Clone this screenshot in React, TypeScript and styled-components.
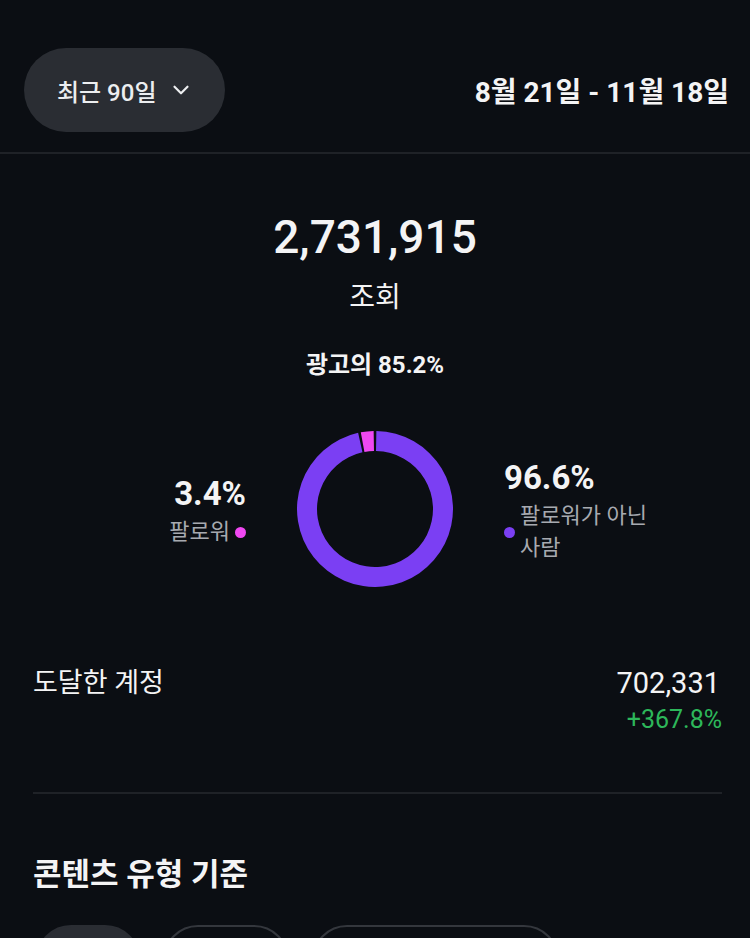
import styled, { createGlobalStyle } from "styled-components";
import { ChevronDown } from "lucide-react";

const GlobalStyle = createGlobalStyle`
  body {
    margin: 0;
    background: #0b0e13;
    font-family: Roboto, "Noto Sans CJK KR", sans-serif;
    color: #f4f4f5;
  }
`;

const Page = styled.div`
  width: 750px;
  height: 938px;
  overflow: hidden;
  background: #0b0e13;
`;

const Header = styled.div`
  display: flex;
  align-items: center;
  justify-content: space-between;
  padding: 48px 21px 20px 24px;
  border-bottom: 2px solid #1f2227;
`;

const RangeButton = styled.button`
  display: flex;
  align-items: center;
  gap: 11px;
  height: 84px;
  padding: 0 31px 0 33px;
  border: none;
  border-radius: 42px;
  background: #2a2d33;
  color: #eceef0;
  font-family: inherit;
  font-size: 24px;
  font-weight: 500;
`;

const DateRange = styled.div`
  font-size: 28px;
  font-weight: 700;
`;

const Summary = styled.section`
  display: flex;
  flex-direction: column;
  align-items: center;
  padding-top: 55px;
`;

const BigNumber = styled.div`
  font-size: 46px;
  line-height: 56px;
  font-weight: 500;
`;

const Caption = styled.div`
  margin-top: 13px;
  font-size: 28px;
  line-height: 40px;
`;

const AdShare = styled.div`
  margin-top: 31px;
  font-size: 24px;
  line-height: 32px;
  font-weight: 700;
`;

const ChartRow = styled.div`
  display: grid;
  grid-template-columns: 1fr auto 1fr;
  align-items: center;
  column-gap: 51px;
  width: 100%;
  margin-top: 50px;
`;

const Legend = styled.div<{ $side: "left" | "right" }>`
  display: flex;
  flex-direction: column;
  align-items: ${(p) => (p.$side === "left" ? "flex-end" : "flex-start")};
  justify-self: ${(p) => (p.$side === "left" ? "end" : "start")};
  margin-top: 4px;
`;

const Percent = styled.div`
  font-size: 33px;
  line-height: 40px;
  font-weight: 700;
`;

const LegendLabel = styled.div`
  display: flex;
  align-items: center;
  gap: 5px;
  margin-top: 2px;
  font-size: 22px;
  line-height: 32px;
  color: #a7aab0;
`;

const LabelText = styled.span`
  max-width: 150px;
`;

const Dot = styled.span<{ $color: string }>`
  flex: none;
  width: 11px;
  height: 11px;
  border-radius: 50%;
  background: ${(p) => p.$color};
`;

const Body = styled.section`
  padding: 0 28px 0 33px;
`;

const MetricRow = styled.div`
  display: flex;
  justify-content: space-between;
  align-items: flex-start;
  margin-top: 78px;
  padding-bottom: 55px;
  border-bottom: 2px solid #1f2227;
`;

const MetricLabel = styled.div`
  font-size: 27px;
  line-height: 36px;
`;

const MetricValues = styled.div`
  display: flex;
  flex-direction: column;
  align-items: flex-end;
`;

const MetricValue = styled.div`
  font-size: 29px;
  line-height: 36px;
  margin-right: 2px;
`;

const Change = styled.div`
  margin-top: 2px;
  font-size: 25px;
  line-height: 34px;
  color: #2db75a;
`;

const SectionTitle = styled.h2`
  margin: 61px 0 0;
  font-size: 31px;
  line-height: 40px;
  font-weight: 700;
`;

const Chips = styled.div`
  display: flex;
  gap: 23px;
  margin-top: 30px;
  margin-left: 3px;
`;

const Chip = styled.div<{ $active?: boolean; $width: number }>`
  width: ${(p) => p.$width}px;
  height: 70px;
  flex: none;
  box-sizing: border-box;
  border-radius: 35px;
  background: ${(p) => (p.$active ? "#2a2d33" : "transparent")};
  border: 2px solid ${(p) => (p.$active ? "#2a2d33" : "#34373d")};
`;

const polar = (r: number, deg: number) => {
  const a = ((deg - 90) * Math.PI) / 180;
  return [78 + r * Math.cos(a), 78 + r * Math.sin(a)];
};

const arc = (start: number, end: number, ro = 78, ri = 58) => {
  const large = end - start > 180 ? 1 : 0;
  const [x1, y1] = polar(ro, start);
  const [x2, y2] = polar(ro, end);
  const [x3, y3] = polar(ri, end);
  const [x4, y4] = polar(ri, start);
  return `M${x1} ${y1} A${ro} ${ro} 0 ${large} 1 ${x2} ${y2} L${x3} ${y3} A${ri} ${ri} 0 ${large} 0 ${x4} ${y4} Z`;
};

const Donut = () => (
  <svg width="156" height="156" viewBox="0 0 156 156">
    <path d={arc(1, 347.5)} fill="#7b3ff3" />
    <path d={arc(349.5, 359)} fill="#f048f2" />
  </svg>
);

export default function App() {
  return (
    <Page>
      <GlobalStyle />
      <Header>
        <RangeButton>
          최근 90일
          <ChevronDown size={26} strokeWidth={2} />
        </RangeButton>
        <DateRange>8월 21일 - 11월 18일</DateRange>
      </Header>

      <Summary>
        <BigNumber>2,731,915</BigNumber>
        <Caption>조회</Caption>
        <AdShare>광고의 85.2%</AdShare>
        <ChartRow>
          <Legend $side="left">
            <Percent>3.4%</Percent>
            <LegendLabel>
              <LabelText>팔로워</LabelText>
              <Dot $color="#f048f2" />
            </LegendLabel>
          </Legend>
          <Donut />
          <Legend $side="right">
            <Percent>96.6%</Percent>
            <LegendLabel>
              <Dot $color="#7b3ff3" />
              <LabelText>팔로워가 아닌 사람</LabelText>
            </LegendLabel>
          </Legend>
        </ChartRow>
      </Summary>

      <Body>
        <MetricRow>
          <MetricLabel>도달한 계정</MetricLabel>
          <MetricValues>
            <MetricValue>702,331</MetricValue>
            <Change>+367.8%</Change>
          </MetricValues>
        </MetricRow>
        <SectionTitle>콘텐츠 유형 기준</SectionTitle>
        <Chips>
          <Chip $active $width={104} />
          <Chip $width={126} />
          <Chip $width={247} />
        </Chips>
      </Body>
    </Page>
  );
}
